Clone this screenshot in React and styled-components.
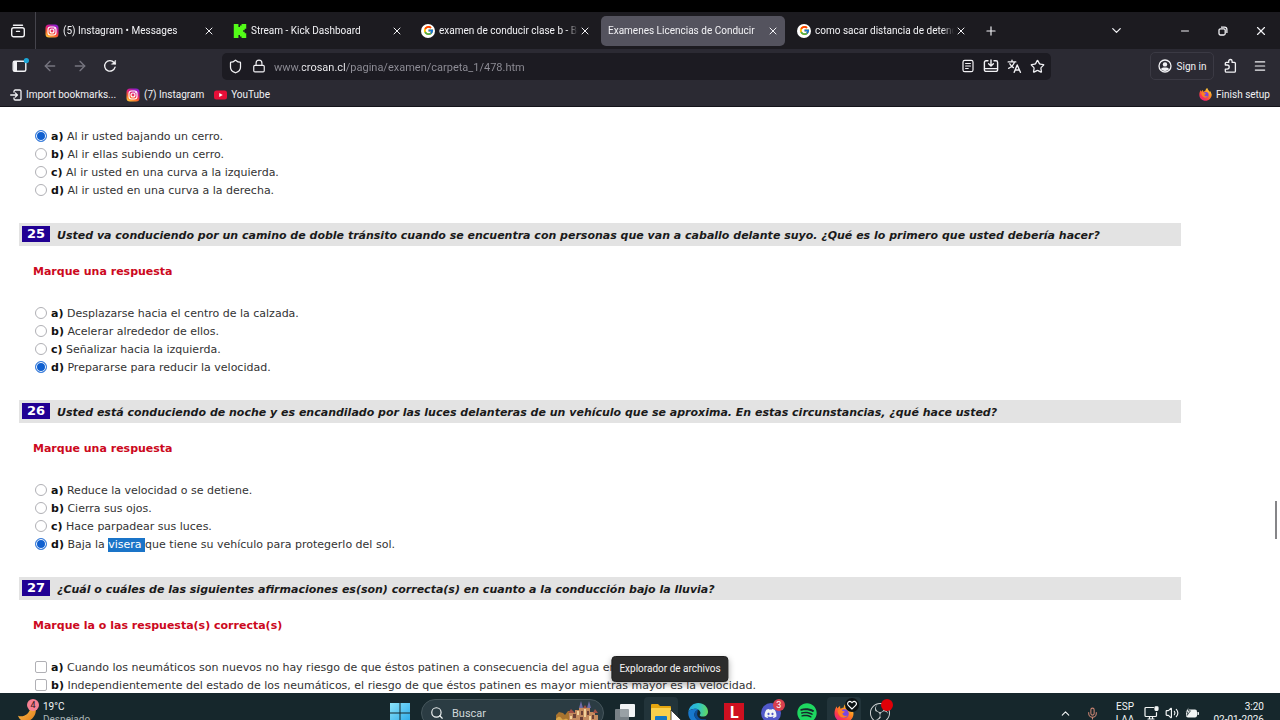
import React, { useState } from "react";
import styled, { createGlobalStyle } from "styled-components";
import {
  ArrowLeft,
  ArrowRight,
  ChevronDown,
  ChevronUp,
  Lock,
  Menu,
  Mic,
  Minus,
  Plus,
  Search,
  Shield,
  Star,
  Volume2,
  X,
} from "lucide-react";
import { FcGoogle } from "react-icons/fc";
import { FaDiscord, FaSpotify } from "react-icons/fa";
import { SiKick, SiObsstudio } from "react-icons/si";

const GlobalStyle = createGlobalStyle`
  * {
    box-sizing: border-box;
  }
  body {
    margin: 0;
    background: #000;
    font-family: Roboto, "Open Sans", sans-serif;
    font-size: 10px;
  }
  button,
  input {
    font: inherit;
    color: inherit;
    margin: 0;
  }
  button {
    padding: 0;
    border: 0;
    background: none;
  }
  a {
    color: inherit;
    text-decoration: none;
  }
  svg {
    display: block;
    flex: none;
  }
`;

const Screen = styled.div`
  position: relative;
  display: flex;
  flex-direction: column;
  height: 100vh;
  padding-top: 12px;
  overflow: hidden;
`;

/* ---------- browser ---------- */

const TabBar = styled.div`
  display: flex;
  align-items: center;
  height: 37px;
  flex: none;
  background: #1c1b20;
  color: #f2f2f5;
`;

const IconButton = styled.button`
  display: flex;
  align-items: center;
  justify-content: center;
  width: ${(p) => p.$w || 30}px;
  height: 28px;
  flex: none;
  color: ${(p) => (p.$dim ? "#777680" : "#f2f2f5")};
`;

const TabOverview = styled.div`
  display: flex;
  align-items: center;
  height: 100%;
  margin-right: 1px;
  border-right: 1px solid #45444c;
`;

const Tabs = styled.div`
  display: flex;
  gap: 4px;
`;

const Tab = styled.div`
  display: flex;
  align-items: center;
  gap: 4px;
  width: 184px;
  height: 30px;
  padding: 0 5px 0 ${(p) => (p.$active ? 7 : 8)}px;
  border-radius: 5px;
  background: ${(p) => (p.$active ? "#54535e" : "transparent")};
`;

const TabTitle = styled.span`
  flex: 1;
  overflow: hidden;
  white-space: nowrap;
  line-height: 18px;
  mask-image: linear-gradient(to left, transparent, #000 12px);
`;

const TabClose = styled.button`
  display: flex;
  align-items: center;
  justify-content: center;
  width: 14px;
  height: 16px;
  margin-left: -4px;
`;

const WindowControls = styled.div`
  display: flex;
  margin-left: auto;
`;

const GoogleBadge = styled.span`
  display: flex;
  align-items: center;
  justify-content: center;
  width: 14px;
  height: 14px;
  border-radius: 50%;
  background: #fff;
`;

const NavBar = styled.div`
  display: flex;
  align-items: center;
  height: 34px;
  flex: none;
  padding: 0 5px;
  background: #2b2a33;
  color: #f2f2f5;
`;

const UrlBar = styled.div`
  display: flex;
  align-items: center;
  flex: 1;
  height: 27px;
  margin: 0 99px 0 97px;
  padding: 0 2px;
  border-radius: 5px;
  background: #1c1b22;
`;

const UrlInput = styled.input`
  flex: 1;
  min-width: 0;
  height: 20px;
  padding: 2px 0 0 4px;
  border: 0;
  outline: 0;
  font-size: 11px;
  color: transparent;
  background: linear-gradient(
    to right,
    #908f98 32px,
    #f5f5f8 32px,
    #f5f5f8 76px,
    #908f98 76px
  );
  background-clip: text;
`;

const SignIn = styled.button`
  display: flex;
  align-items: center;
  justify-content: center;
  gap: 5px;
  width: 64px;
  height: 28px;
  margin-right: 1px;
  border: 1px solid #3b3a44;
  border-radius: 5px;
`;

const BookmarksBar = styled.nav`
  display: flex;
  align-items: center;
  gap: 10px;
  height: 24px;
  flex: none;
  padding: 0 10px;
  border-bottom: 1px solid #14131a;
  background: #2b2a33;
  color: #f2f2f5;
`;

const Bookmark = styled.a`
  display: flex;
  align-items: center;
  gap: 4px;
  line-height: 16px;
  white-space: nowrap;
  margin-left: ${(p) => (p.$end ? "auto" : "0")};
`;

/* ---------- exam page ---------- */

const Page = styled.main`
  position: relative;
  flex: 1;
  min-height: 0;
  overflow: hidden;
  padding: 20px 99px 0 19px;
  background: #fff;
  color: #333;
  font-family: "DejaVu Sans", Verdana, sans-serif;
  font-size: 11px;
`;

const Question = styled.section`
  margin-top: 24px;
`;

const QuestionTitle = styled.h2`
  display: flex;
  align-items: center;
  gap: 7px;
  height: 23px;
  margin: 0;
  padding: 0 0 1px 3px;
  background: #e3e3e3;
  color: #1a1a1a;
  font-size: 11px;
  white-space: nowrap;

  em {
    padding-top: 4px;
    line-height: 18px;
  }
`;

const QuestionNumber = styled.span`
  width: 28px;
  background: #210094;
  color: #fff;
  font-size: 13px;
  line-height: 16px;
  text-align: center;
`;

const Hint = styled.p`
  margin: 17px 0 23px;
  padding-left: 14px;
  color: #cc0820;
  font-weight: bold;
  line-height: 18px;
`;

const Options = styled.div`
  display: flex;
  flex-direction: column;
  padding-left: 16px;
`;

const Option = styled.label`
  display: flex;
  align-items: center;
  gap: 4px;
  height: 18px;
  line-height: 18px;
  white-space: nowrap;

  b {
    color: #111;
  }
`;

const OptionText = styled.span`
  padding-top: 2px;
`;

const Radio = styled.input`
  appearance: none;
  width: 12px;
  height: 12px;
  border: 1px solid #b0b0b5;
  border-radius: 50%;
  background: #fff;

  &:checked {
    border-color: #3d80dc;
    background: #1060d0;
    box-shadow: inset 0 0 0 1px #fff;
  }
`;

const Checkbox = styled.input`
  appearance: none;
  width: 12px;
  height: 12px;
  border: 1px solid #b0b0b5;
  border-radius: 2px;
  background: #fff;
`;

const Selection = styled.mark`
  display: inline-block;
  height: 14px;
  line-height: 14px;
  white-space: pre;
  background: #1a74c8;
  color: #fff;
`;

const ScrollThumb = styled.div`
  position: absolute;
  right: 3px;
  top: 394px;
  width: 2px;
  height: 38px;
  background: #858588;
`;

/* ---------- taskbar ---------- */

const Taskbar = styled.footer`
  height: 27px;
  flex: none;
  overflow: hidden;
  background: #16272c;
  color: #f2f5f5;
`;

const TaskbarRow = styled.div`
  display: grid;
  grid-template-columns: 1fr auto 1fr;
  align-items: center;
  height: 40px;
`;

const Weather = styled.button`
  display: flex;
  align-items: center;
  gap: 4px;
  padding-left: 17px;
  text-align: left;
  line-height: 13px;
`;

const Muted = styled.div`
  color: #a9b3b5;
`;

const Center = styled.div`
  display: flex;
  align-items: center;
  gap: 4px;
`;

const TaskCell = styled.button`
  position: relative;
  display: flex;
  align-items: center;
  justify-content: center;
  width: 34px;
  height: 32px;
  border-radius: 4px;
  background: ${(p) => (p.$open ? "#22343a" : "transparent")};
`;

const SearchBox = styled.label`
  display: flex;
  align-items: center;
  gap: 8px;
  width: 183px;
  height: 28px;
  padding: 0 2px 0 8px;
  border: 1px solid #46565c;
  border-radius: 14px;
  background: #2b3c43;
`;

const SearchInput = styled.input`
  flex: 1;
  min-width: 0;
  padding: 0;
  border: 0;
  outline: 0;
  background: none;
  font-size: 11px;

  &::placeholder {
    color: #d0d8da;
    opacity: 1;
  }
`;

const Apps = styled.div`
  display: flex;
  justify-content: space-between;
  width: 289px;
`;

const Badge = styled.span`
  position: absolute;
  top: ${(p) => p.$top}px;
  right: ${(p) => p.$right}px;
  width: 12px;
  height: 12px;
  border-radius: 50%;
  background: ${(p) => p.$bg};
  color: ${(p) => p.$fg || "#fff"};
  font-size: 9px;
  line-height: 12px;
  text-align: center;
`;

const MoonWrap = styled.span`
  position: relative;
  display: block;
  width: 22px;
  height: 24px;
`;

const RedTile = styled.span`
  width: 20px;
  height: 20px;
  background: #cf1020;
  color: #fff;
  font-size: 16px;
  font-weight: bold;
  line-height: 20px;
  text-align: center;
`;

const DiscordCircle = styled.span`
  display: flex;
  align-items: center;
  justify-content: center;
  width: 20px;
  height: 20px;
  border-radius: 50%;
  background: #5059c9;
`;

const HeartSpot = styled.span`
  position: absolute;
  top: 1px;
  right: 2px;
`;

const Tray = styled.div`
  display: flex;
  align-items: center;
  justify-content: flex-end;
  padding-right: 16px;
  line-height: 13px;
`;

const TrayButton = styled.button`
  display: flex;
  align-items: center;
  justify-content: center;
  gap: 6px;
  min-width: 27px;
  height: 26px;
`;

const Language = styled.button`
  width: 38px;
  line-height: 13px;
  text-align: center;
`;

const Clock = styled.time`
  min-width: 52px;
  margin-left: 13px;
  text-align: right;
`;

const Tooltip = styled.div`
  position: absolute;
  left: calc(50% + 30px);
  bottom: 38px;
  transform: translateX(-50%);
  padding: 0 7px;
  border: 1px solid #202020;
  border-radius: 4px;
  background: #2c2c2c;
  box-shadow: 0 3px 6px rgba(0, 0, 0, 0.3);
  color: #f5f5f5;
  line-height: 24px;
  white-space: nowrap;
`;

const Pointer = styled.svg`
  position: absolute;
  left: 26px;
  top: 13px;
  overflow: visible;
`;

/* ---------- icons ---------- */

function InstagramIcon() {
  return (
    <svg width="14" height="14" viewBox="0 0 28 28">
      <defs>
        <linearGradient id="insta" x1="0.2" y1="1" x2="0.7" y2="0">
          <stop offset="0" stopColor="#ffc83a" />
          <stop offset="0.35" stopColor="#fb5a2c" />
          <stop offset="0.65" stopColor="#dc1c80" />
          <stop offset="1" stopColor="#8a1fd0" />
        </linearGradient>
      </defs>
      <rect x="1" y="1" width="26" height="26" rx="7" fill="url(#insta)" />
      <g fill="none" stroke="#fff" strokeWidth="2.2">
        <rect x="6" y="6" width="16" height="16" rx="5" />
        <circle cx="14" cy="14" r="4" />
      </g>
      <circle cx="18.6" cy="9.4" r="1.2" fill="#fff" />
    </svg>
  );
}

function YoutubeIcon() {
  return (
    <svg width="13" height="10" viewBox="0 0 26 20">
      <rect y="1" width="26" height="18" rx="5" fill="#e60f38" />
      <path d="M10.5 6v8l7-4z" fill="#fff" />
    </svg>
  );
}

function TabOverviewIcon() {
  return (
    <svg width="16" height="16" viewBox="0 0 16 16" fill="none" stroke="currentColor" strokeWidth="1.4" strokeLinecap="round">
      <path d="M3.5 2.2h9M6.5 8.4h3" />
      <rect x="1.7" y="4.8" width="12.6" height="9" rx="2" />
    </svg>
  );
}

function SidebarIcon() {
  return (
    <svg width="18" height="16" viewBox="0 0 18 16">
      <rect x="2.2" y="3.2" width="12.6" height="10" rx="1.5" fill="none" stroke="#f2f2f5" strokeWidth="1.4" />
      <path d="M3 3.5h3v9.5H3z" fill="#f2f2f5" />
      <circle cx="15.4" cy="2.6" r="2.6" fill="#1ba6d8" />
    </svg>
  );
}

function ReloadIcon() {
  return (
    <svg width="14" height="14" viewBox="0 0 14 14" fill="none" stroke="currentColor" strokeWidth="1.3" strokeLinecap="round">
      <path d="M12.1 8.2A5.3 5.3 0 1 1 11 3.4l1.2 1.3" />
      <path d="M12.6 1.4v3.9H8.7z" fill="currentColor" strokeWidth="0.5" />
    </svg>
  );
}

function ReaderIcon() {
  return (
    <svg width="14" height="14" viewBox="0 0 14 14" fill="none" stroke="currentColor" strokeWidth="1.2" strokeLinecap="round">
      <rect x="2" y="1.3" width="10" height="11.4" rx="1.8" />
      <path d="M4.6 4.5h4.8M4.6 7h4.8M4.6 9.5h2.6" />
    </svg>
  );
}

function InstallIcon() {
  return (
    <svg width="16" height="14" viewBox="0 0 16 14" fill="none" stroke="currentColor" strokeWidth="1.4" strokeLinecap="round" strokeLinejoin="round">
      <path d="M5 1.8H3A1.6 1.6 0 0 0 1.4 3.4v7.4A1.6 1.6 0 0 0 3 12.4h10a1.6 1.6 0 0 0 1.6-1.6V3.4A1.6 1.6 0 0 0 13 1.8h-2" />
      <path d="M1.6 9.6h12.8M8 .9v6M5.6 4.8 8 7.1l2.4-2.3" />
    </svg>
  );
}

function TranslateIcon() {
  return (
    <svg width="15" height="15" viewBox="0 0 15 15" fill="none" stroke="currentColor" strokeWidth="1.4" strokeLinecap="round" strokeLinejoin="round">
      <path d="M1.2 2.9h7.6M5 1.3v1.6M7.4 3.1C6.7 5.6 4.6 7.9 1.6 9.3M2.8 4.8c.8 1.6 2 2.8 3.6 3.8" />
      <path d="m7.2 13.3 3-7.3 3.2 7.3M8.3 11h4" />
    </svg>
  );
}

function AccountIcon() {
  return (
    <svg width="14" height="14" viewBox="0 0 14 14">
      <circle cx="7" cy="7" r="6" fill="none" stroke="#f2f2f5" strokeWidth="1.3" />
      <circle cx="7" cy="5.4" r="2.2" fill="#f2f2f5" />
      <path d="M2.9 10.3C3.6 8.8 5 8.6 7 8.6s3.4.2 4.1 1.7A5.3 5.3 0 0 1 7 12a5.3 5.3 0 0 1-4.1-1.7z" fill="#f2f2f5" />
    </svg>
  );
}

function ExtensionIcon() {
  return (
    <svg width="14" height="16" viewBox="0 0 14 16" fill="none" stroke="currentColor" strokeWidth="1.3" strokeLinejoin="round">
      <path d="M2.3 7V5.4a1 1 0 0 1 1-1h2.4V3.2a1.7 1.7 0 0 1 3.4 0v1.2h2.3a1 1 0 0 1 1 1v7.8a1 1 0 0 1-1 1H3.3a1 1 0 0 1-1-1v-2h1.8a2 2 0 0 0 0-4.200z" />
    </svg>
  );
}

function ImportIcon() {
  return (
    <svg width="12" height="12" viewBox="0 0 12 12" fill="none" stroke="currentColor" strokeWidth="1.3" strokeLinecap="round" strokeLinejoin="round">
      <path d="M4 3.2V2.3A1.3 1.3 0 0 1 5.3 1h4.4A1.3 1.3 0 0 1 11 2.3v7.4A1.3 1.3 0 0 1 9.7 11H5.3A1.3 1.3 0 0 1 4 9.7v-.9" />
      <path d="M.7 6h6.6M5.3 3.9 7.4 6 5.3 8.1" />
    </svg>
  );
}

function RestoreIcon() {
  return (
    <svg width="10" height="10" viewBox="0 0 10 10" fill="none" stroke="currentColor" strokeWidth="1.3">
      <rect x="1" y="2.8" width="6.2" height="6.2" rx="1.5" />
      <path d="M3 1.2h3.6a2.3 2.3 0 0 1 2.3 2.3V7" />
    </svg>
  );
}

function FirefoxIcon({ size }) {
  return (
    <svg width={size} height={size} viewBox="0 0 24 24">
      <defs>
        <linearGradient id="fox" x1="0.85" y1="0.05" x2="0.2" y2="0.95">
          <stop offset="0" stopColor="#ffe14a" />
          <stop offset="0.4" stopColor="#ff8a1e" />
          <stop offset="0.75" stopColor="#ff3a4a" />
          <stop offset="1" stopColor="#e0228a" />
        </linearGradient>
      </defs>
      <path
        d="M22.3 9c-.6-1.6-1.9-3.2-2.9-3.7.5 1 .9 2 1 2.9-1.7-3.5-4.5-4.3-5.1-8.2-2.4 1.3-3.6 3.6-3.8 5.7-1.5 0-2.6.6-3.5 1.2C7.3 5.9 7.1 4.7 7.5 3.6 5.7 4.5 4.7 5.7 4 6.7 3.5 6 3.5 4.4 3.6 3.9 1.8 5.5.6 9 .6 12.4.6 18.7 5.7 23.6 12 23.6S23.4 18.6 23.4 12.5c0-1.2-.4-2.5-1.1-3.5z"
        fill="url(#fox)"
      />
      <circle cx="12.5" cy="12.8" r="5.2" fill="#7a45e0" />
      <path d="M4.5 8.8c2.4-1.4 4.6-.7 6 .8 1 .2 2 .2 2.5.6-.4 1.3-2.2 1.5-2.9 2.5.5 2.6 3.3 3.5 6.3 2.1-1.7 3.7-7.2 4-9.7.6C5.1 13.6 4.2 11 4.5 8.8z" fill="#ff8022" />
    </svg>
  );
}

function MoonIcon() {
  return (
    <svg width="22" height="24" viewBox="0 0 22 24">
      <defs>
        <linearGradient id="moon" x1="0" y1="0" x2="1" y2="1">
          <stop offset="0" stopColor="#ffc04a" />
          <stop offset="1" stopColor="#e07d1c" />
        </linearGradient>
      </defs>
      <path d="M18.5 5.5c2 7.5-3.5 15-10.5 15C5 20.5 2.2 18 1 14.7c5 1.7 11-.8 12.500-8z" fill="url(#moon)" />
    </svg>
  );
}

function WindowsIcon() {
  return (
    <svg width="20" height="20" viewBox="0 0 20 20">
      <defs>
        <linearGradient id="win" x1="0" y1="0" x2="1" y2="1">
          <stop offset="0" stopColor="#8de3fa" />
          <stop offset="1" stopColor="#28a8e8" />
        </linearGradient>
      </defs>
      <path d="M0 0h9.5v9.5H0zM10.5 0H20v9.5h-9.5zM0 10.5h9.5V20H0zM10.5 10.5H20V20h-9.5z" fill="url(#win)" />
    </svg>
  );
}

function CastleIcon() {
  return (
    <svg width="46" height="26" viewBox="0 0 46 26">
      <path d="M1 15l3-3 4 1 2 2 3-4h5v15H1z" fill="#a9742f" />
      <path d="M14 13h6v-3h4V8h11v4h5v3h3v11H14z" fill="#c38a5e" />
      <path d="M24 8l2-7 2 7zM32 8l2-7 2 7z" fill="#6d6aa6" />
      <path d="M13 13l3-4 4 4zM38 13l2-4 3 4zM28 8l2-3 2 3z" fill="#a24f45" />
      <path d="M18 14h3v4h-3zM26 11h2v4h-2zM32 11h2v4h-2zM37 15h2v4h-2zM25 17h3v4h-3z" fill="#6c4036" />
      <path d="M22 11h2v4h-2zM29 9h2v8h-2zM15 16h2v3h-2zM34 16h2v4h-2z" fill="#f3d29b" />
      <path d="M1 19c3-4 5-2 6 0s4-2 6 1v6H1z" fill="#d9a648" />
      <path d="M9 22c3-3 5-1 9 0s7-2 11 0 8-1 14 1v3H9z" fill="#566b38" />
    </svg>
  );
}

function TaskViewIcon() {
  return (
    <svg width="20" height="18" viewBox="0 0 20 18">
      <rect x="5" width="15" height="13" rx="1" fill="#f2f4f5" />
      <rect y="5" width="14" height="13" rx="1" fill="#8a9296" opacity="0.85" />
    </svg>
  );
}

function FolderIcon() {
  return (
    <svg width="22" height="20" viewBox="0 0 22 20">
      <path d="M1 2a1 1 0 0 1 1-1h6l2 2h10a1 1 0 0 1 1 1v13H1z" fill="#e5a50f" />
      <rect x="1" y="5" width="20" height="14" rx="1" fill="#fbd04c" />
      <path d="M5 14a1 1 0 0 1 1-1h10a1 1 0 0 1 1 1v5H5z" fill="#1678c4" />
    </svg>
  );
}

function EdgeIcon() {
  return (
    <svg width="20" height="20" viewBox="0 0 20 20">
      <defs>
        <linearGradient id="edgeTop" x1="0" y1="0.4" x2="1" y2="0.5">
          <stop offset="0" stopColor="#26a8e8" />
          <stop offset="0.5" stopColor="#2fc3c8" />
          <stop offset="1" stopColor="#62d860" />
        </linearGradient>
      </defs>
      <path d="M.4 8.5C1.3 3.5 5.3 0 10.2 0 15.8 0 20 4 20 8.7c0 3-2.2 4.9-5 4.9-2 0-3.300-.7-3.300-1.400 0-.5.8-.8.8-2.200C12.500 7.800 10 5.700 7 5.700 4 5.700 1.600 7 .4 8.500z" fill="url(#edgeTop)" />
      <path d="M.4 8.500C2 6.500 4.500 5.700 7 5.700c1.500 0 2.700.5 3.600 1.200C8 7 6.400 9.200 6.400 11.600c0 3.700 3.300 6.600 7 6.600 1.400 0 2.600-.4 3.900-1.100A10 10 0 0 1 10 20C4.300 20-.6 15 .4 8.500z" fill="#1878cc" />
      <path d="M9.700 8.700c-1.800 3.300.8 7.600 6 7.600 1.100 0 2-.2 2.800-.6-1 1.700-2.900 2.500-5.100 2.500-3.700 0-7-2.900-7-6.600 0-2.100 1.200-4 3.100-4.600z" fill="#0c4f9c" />
    </svg>
  );
}

function HeartBadge() {
  return (
    <svg width="14" height="14" viewBox="0 0 14 14">
      <circle cx="7" cy="7" r="7" fill="#0c1214" />
      <path d="M7 11 3.3 7.3a2.2 2.2 0 0 1 3.1-3.2l.6.6.6-.6a2.2 2.2 0 0 1 3.1 3.2z" fill="none" stroke="#fff" strokeWidth="1.1" />
    </svg>
  );
}

function MonitorIcon() {
  return (
    <svg width="15" height="14" viewBox="0 0 15 14" fill="none" stroke="currentColor" strokeWidth="1.2" strokeLinecap="round">
      <path d="M9.5 1.5H2a1 1 0 0 0-1 1v7a1 1 0 0 0 1 1h9.5a1 1 0 0 0 1-1V6.5M4 13h6M5.5 10.7V13M8.5 10.7V13" />
      <rect x="11" y=".8" width="3" height="3.6" rx=".8" fill="currentColor" />
    </svg>
  );
}

function BatteryIcon() {
  return (
    <svg width="14" height="12" viewBox="0 0 14 12">
      <rect x="1" y="2.5" width="11" height="8" rx="2" fill="#f2f5f5" />
      <path d="M12.5 5h.8a.7.7 0 0 1 .7.7v1.6a.7.7 0 0 1-.7.7h-.8z" fill="#f2f5f5" />
      <path d="M3.8 0 .5 5h2.2L2 8.5 5.5 3.8H3.4z" fill="#f2f5f5" stroke="#16272c" strokeWidth=".7" />
    </svg>
  );
}

/* ---------- data ---------- */

const tabs = [
  { icon: <InstagramIcon />, title: "(5) Instagram • Messages" },
  { icon: <SiKick size={14} color="#53fc18" />, title: "Stream - Kick Dashboard" },
  { icon: <GoogleBadge><FcGoogle size={11} /></GoogleBadge>, title: "examen de conducir clase b - Buscar" },
  { title: "Examenes Licencias de Conducir", active: true },
  { icon: <GoogleBadge><FcGoogle size={11} /></GoogleBadge>, title: "como sacar distancia de detencion" },
];

const questions = [
  {
    id: 24,
    answer: "a",
    options: [
      "Al ir usted bajando un cerro.",
      "Al ir ellas subiendo un cerro.",
      "Al ir usted en una curva a la izquierda.",
      "Al ir usted en una curva a la derecha.",
    ],
  },
  {
    id: 25,
    title:
      "Usted va conduciendo por un camino de doble tránsito cuando se encuentra con personas que van a caballo delante suyo. ¿Qué es lo primero que usted debería hacer?",
    hint: "Marque una respuesta",
    answer: "d",
    options: [
      "Desplazarse hacia el centro de la calzada.",
      "Acelerar alrededor de ellos.",
      "Señalizar hacia la izquierda.",
      "Prepararse para reducir la velocidad.",
    ],
  },
  {
    id: 26,
    title:
      "Usted está conduciendo de noche y es encandilado por las luces delanteras de un vehículo que se aproxima. En estas circunstancias, ¿qué hace usted?",
    hint: "Marque una respuesta",
    answer: "d",
    options: [
      "Reduce la velocidad o se detiene.",
      "Cierra sus ojos.",
      "Hace parpadear sus luces.",
      <>
        Baja la <Selection>visera </Selection>que tiene su vehículo para
        protegerlo del sol.
      </>,
    ],
  },
  {
    id: 27,
    title:
      "¿Cuál o cuáles de las siguientes afirmaciones es(son) correcta(s) en cuanto a la conducción bajo la lluvia?",
    hint: "Marque la o las respuesta(s) correcta(s)",
    multiple: true,
    options: [
      "Cuando los neumáticos son nuevos no hay riesgo de que éstos patinen a consecuencia del agua en la calzada.",
      "Independientemente del estado de los neumáticos, el riesgo de que éstos patinen es mayor mientras mayor es la velocidad.",
    ],
  },
];

function QuestionOptions({ question }) {
  const [answer, setAnswer] = useState(question.answer);

  return (
    <Options>
      {question.options.map((text, i) => {
        const letter = "abcd"[i];
        return (
          <Option key={letter}>
            {question.multiple ? (
              <Checkbox type="checkbox" name={`q${question.id}`} />
            ) : (
              <Radio
                type="radio"
                name={`q${question.id}`}
                checked={answer === letter}
                onChange={() => setAnswer(letter)}
              />
            )}
            <OptionText>
              <b>{letter})</b> {text}
            </OptionText>
          </Option>
        );
      })}
    </Options>
  );
}

function Browser() {
  const [url, setUrl] = useState("www.crosan.cl/pagina/examen/carpeta_1/478.htm");

  return (
    <>
      <TabBar>
        <TabOverview>
          <IconButton aria-label="Tabs" $w={35}><TabOverviewIcon /></IconButton>
        </TabOverview>
        <Tabs>
          {tabs.map((tab) => (
            <Tab key={tab.title} $active={tab.active}>
              {tab.icon}
              <TabTitle>{tab.title}</TabTitle>
              <TabClose aria-label="Close tab"><X size={12} /></TabClose>
            </Tab>
          ))}
        </Tabs>
        <IconButton aria-label="New tab" $w={36}><Plus size={14} /></IconButton>
        <WindowControls>
          <IconButton aria-label="List tabs" $w={100}><ChevronDown size={15} /></IconButton>
          <IconButton aria-label="Minimize" $w={38}><Minus size={12} /></IconButton>
          <IconButton aria-label="Restore" $w={38}><RestoreIcon /></IconButton>
          <IconButton aria-label="Close" $w={38}><X size={14} /></IconButton>
        </WindowControls>
      </TabBar>
      <NavBar>
        <IconButton aria-label="Sidebar"><SidebarIcon /></IconButton>
        <IconButton aria-label="Back" $dim><ArrowLeft size={16} /></IconButton>
        <IconButton aria-label="Forward" $dim><ArrowRight size={16} /></IconButton>
        <IconButton aria-label="Reload"><ReloadIcon /></IconButton>
        <UrlBar>
          <IconButton aria-label="Protection" $w={23}><Shield size={15} /></IconButton>
          <IconButton aria-label="Connection" $w={23}><Lock size={14} /></IconButton>
          <UrlInput aria-label="Address" value={url} onChange={(e) => setUrl(e.target.value)} />
          <IconButton aria-label="Reader view" $w={23}><ReaderIcon /></IconButton>
          <IconButton aria-label="Install" $w={23}><InstallIcon /></IconButton>
          <IconButton aria-label="Translate" $w={24}><TranslateIcon /></IconButton>
          <IconButton aria-label="Bookmark" $w={23}><Star size={15} /></IconButton>
        </UrlBar>
        <SignIn><AccountIcon />Sign in</SignIn>
        <IconButton aria-label="Extensions"><ExtensionIcon /></IconButton>
        <IconButton aria-label="Menu"><Menu size={14} /></IconButton>
      </NavBar>
      <BookmarksBar>
        <Bookmark href="#"><ImportIcon />Import bookmarks...</Bookmark>
        <Bookmark href="#"><InstagramIcon />(7) Instagram</Bookmark>
        <Bookmark href="#"><YoutubeIcon />YouTube</Bookmark>
        <Bookmark href="#" $end><FirefoxIcon size={13} />Finish setup</Bookmark>
      </BookmarksBar>
    </>
  );
}

function SystemTaskbar() {
  return (
    <Taskbar>
      <TaskbarRow>
        <Weather>
          <MoonWrap>
            <MoonIcon />
            <Badge $top={-2} $right={0} $bg="#f58092" $fg="#2a1418">4</Badge>
          </MoonWrap>
          <div>
            19°C
            <Muted>Despejado</Muted>
          </div>
        </Weather>
        <Center>
          <TaskCell aria-label="Inicio"><WindowsIcon /></TaskCell>
          <SearchBox>
            <Search size={14} />
            <SearchInput placeholder="Buscar" aria-label="Buscar" />
            <CastleIcon />
          </SearchBox>
          <Apps>
            <TaskCell aria-label="Vista de tareas"><TaskViewIcon /></TaskCell>
            <TaskCell aria-label="Explorador de archivos" $open>
              <FolderIcon />
              <Pointer width="12" height="18" viewBox="0 0 12 18">
                <path d="M1 0v15l3.5-3.3L7 17l2.500-1-2.400-5H12z" fill="#fff" stroke="#222" strokeWidth="0.8" />
              </Pointer>
            </TaskCell>
            <TaskCell aria-label="Edge"><EdgeIcon /></TaskCell>
            <TaskCell><RedTile>L</RedTile></TaskCell>
            <TaskCell aria-label="Discord">
              <DiscordCircle><FaDiscord size={13} /></DiscordCircle>
              <Badge $top={2} $right={3} $bg="#d8404e">3</Badge>
            </TaskCell>
            <TaskCell aria-label="Spotify"><FaSpotify size={20} color="#1ed760" /></TaskCell>
            <TaskCell aria-label="Firefox" $open>
              <FirefoxIcon size={20} />
              <HeartSpot><HeartBadge /></HeartSpot>
            </TaskCell>
            <TaskCell aria-label="OBS">
              <SiObsstudio size={20} color="#d5d9da" />
              <Badge $top={2} $right={4} $bg="#e00008" />
            </TaskCell>
          </Apps>
        </Center>
        <Tray>
          <TrayButton aria-label="Iconos ocultos"><ChevronUp size={13} /></TrayButton>
          <TrayButton aria-label="Micrófono"><Mic size={13} color="#c98472" /></TrayButton>
          <Language>
            ESP
            <br />
            LAA
          </Language>
          <TrayButton aria-label="Red, volumen y batería">
            <MonitorIcon />
            <Volume2 size={14} />
            <BatteryIcon />
          </TrayButton>
          <Clock>
            3:20
            <br />
            02-01-2026
          </Clock>
        </Tray>
      </TaskbarRow>
    </Taskbar>
  );
}

export default function App() {
  return (
    <Screen>
      <GlobalStyle />
      <Browser />
      <Page>
        {questions.map((question) =>
          question.title ? (
            <Question key={question.id}>
              <QuestionTitle>
                <QuestionNumber>{question.id}</QuestionNumber>
                <em>{question.title}</em>
              </QuestionTitle>
              <Hint>{question.hint}</Hint>
              <QuestionOptions question={question} />
            </Question>
          ) : (
            <QuestionOptions key={question.id} question={question} />
          )
        )}
        <ScrollThumb />
      </Page>
      <SystemTaskbar />
      <Tooltip role="tooltip">Explorador de archivos</Tooltip>
    </Screen>
  );
}
